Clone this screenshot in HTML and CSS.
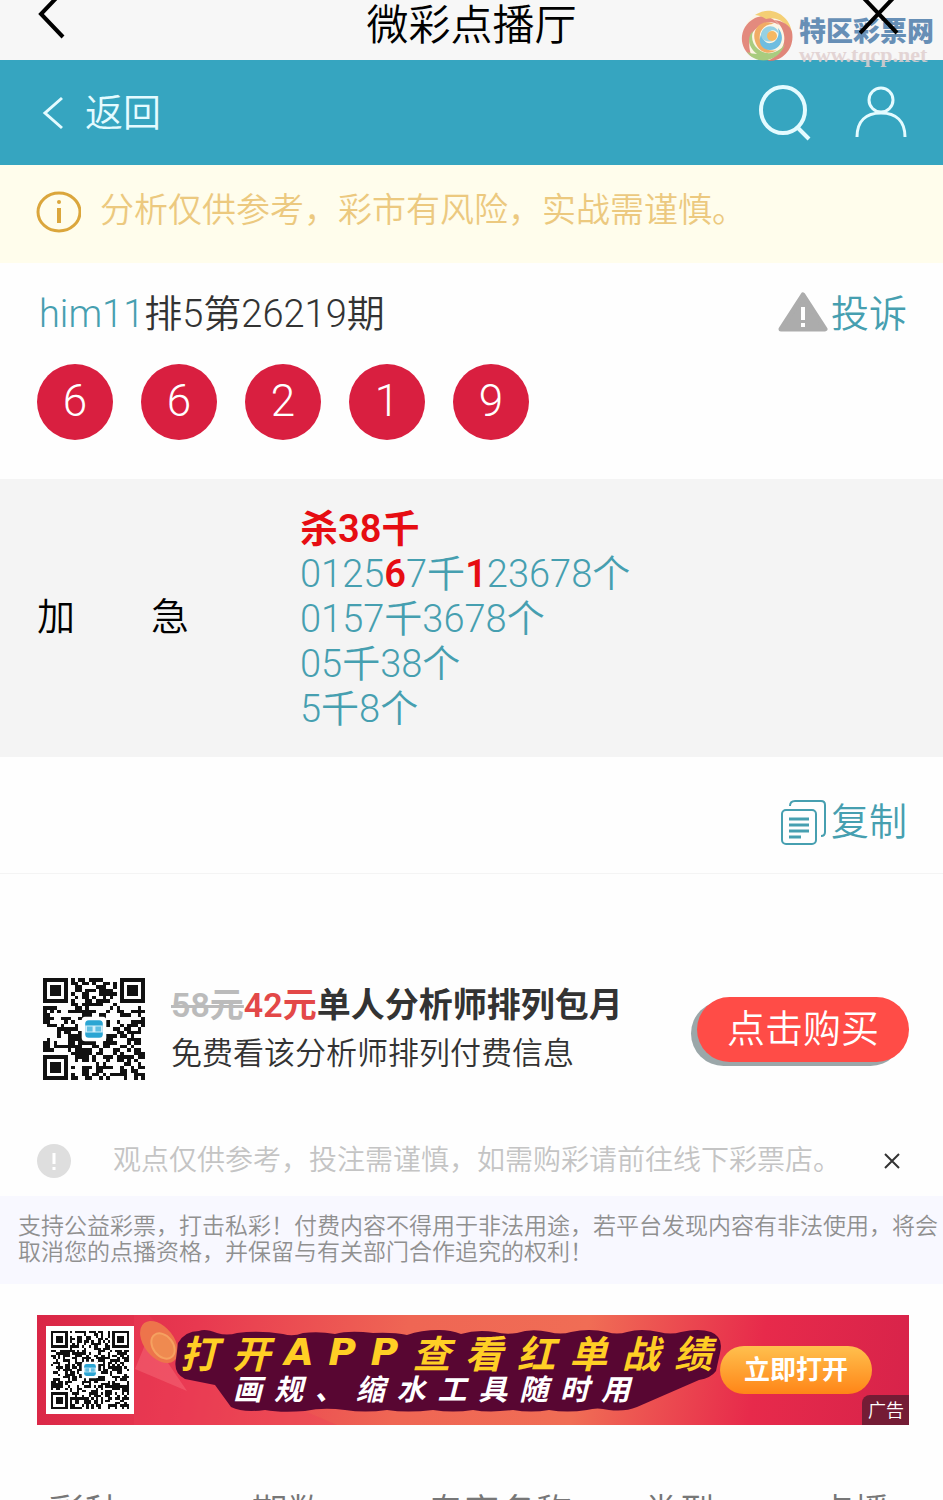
FILE: index.html
```html
<!DOCTYPE html>
<html lang="zh-CN">
<head>
<meta charset="utf-8">
<meta name="viewport" content="width=device-width, initial-scale=1">
<title>微彩点播厅</title>
<link rel="stylesheet" href="styles.css">
</head>
<body>
<div class="page">
  <header class="titlebar">
    <div class="watermark">
      <svg width="52" height="52" viewBox="0 0 52 52">
        <circle cx="26" cy="26" r="24" fill="#fdf6e3"/>
        <path d="M14 8C-3 17-3 38 11 47C5 33 9 20 22 14C28 11 34 12 38 15C32 7 23 4 14 8Z" fill="#e0776a"/>
        <path d="M14 5C30-6 50 6 51 24C46 12 35 6 25 9C20 6 17 5 14 5Z" fill="#f4c95f"/>
        <path d="M51 22C54 38 42 52 26 51C38 46 45 36 43 25C42 18 38 13 33 10C42 11 49 15 51 22Z" fill="#dd7365"/>
        <path d="M6 42C16 56 38 52 44 34C37 44 25 46 17 39C11 34 10 27 12 21C5 28 8 38 16 44C13 44 9 43 6 42Z" fill="#9cc56b"/>
        <path d="M14 31C10 18 22 8 33 14C25 13 17 20 19 30C21 38 28 42 36 40C27 46 17 42 14 31Z" fill="#f0a04b"/>
        <path d="M37 18C45 27 40 40 29 40C20 40 16 31 21 23C21 30 25 34 30 33C36 32 39 25 37 18Z" fill="#58b3dc"/>
        <path d="M20 24C22 14 37 13 38 25C35 19 29 19 27 24C26 28 29 31 32 31C25 33 20 30 20 24Z" fill="#86cbe0"/>
        <circle cx="31" cy="26" r="5" fill="#f6ae49"/>
      </svg>
      <div class="watermark-text"><strong>特区彩票网</strong><span>www.tqcp.net</span></div>
    </div>
    <button class="icon-btn" aria-label="后退"><svg width="28" height="48" viewBox="0 0 28 48"><path d="M26-10 3 14 25 37" fill="none" stroke="#000" stroke-width="4"/></svg></button>
    <h1>微彩点播厅</h1>
    <button class="icon-btn" aria-label="关闭"><svg width="40" height="48" viewBox="0 0 40 48"><path d="M-3-10 38 33M40-8 1 33" fill="none" stroke="#000" stroke-width="4"/></svg></button>
  </header>

  <nav class="navbar">
    <a href="#" class="back"><svg width="22" height="34" viewBox="0 0 22 34"><path d="M20 2 3 17 20 32" fill="none" stroke="#e4fbff" stroke-width="3"/></svg>返回</a>
    <div class="nav-actions">
      <button class="icon-btn" aria-label="搜索"><svg width="52" height="56" viewBox="0 0 52 56" fill="none" stroke="#e4fbff" stroke-width="4"><ellipse cx="24" cy="25" rx="22" ry="23"/><path d="m38 42 12 12"/></svg></button>
      <button class="icon-btn" aria-label="我的"><svg width="52" height="54" viewBox="0 0 52 54" fill="none" stroke="#e4fbff" stroke-width="3"><circle cx="26" cy="14" r="12"/><path d="M2 51C2 35 11 27 26 27S50 35 50 51"/></svg></button>
    </div>
  </nav>

  <p class="notice"><svg width="45" height="42" viewBox="0 0 45 42"><ellipse cx="23" cy="21" rx="21" ry="19" fill="none" stroke="#dba63c" stroke-width="3"/><path d="M23 17V32" stroke="#dba63c" stroke-width="4"/><circle cx="23" cy="11" r="2" fill="#dba63c"/></svg><span>分析仅供参考，彩市有风险，实战需谨慎。</span></p>

  <section class="issue">
    <div class="issue-head">
      <h2><a href="#">him11</a>排5第26219期</h2>
      <a href="#" class="action"><svg width="50" height="44" viewBox="0 0 50 44"><path d="M25 3 47 37H3Z" fill="#acacac" stroke="#acacac" stroke-width="5" stroke-linejoin="round"/><path d="M25 15V28M25 31V35" stroke="#fff" stroke-width="4"/></svg>投诉</a>
    </div>
    <div class="balls"><span>6</span><span>6</span><span>2</span><span>1</span><span>9</span></div>
  </section>

  <section class="picks">
    <div class="picks-label"><span>加</span><span>急</span></div>
    <div class="picks-body">
      <div><b>杀38千</b></div>
      <div>0125<b>6</b>7千<b>1</b>23678个</div>
      <div>0157千3678个</div>
      <div>05千38个</div>
      <div>5千8个</div>
    </div>
  </section>

  <div class="copy-row">
    <button class="action"><svg width="50" height="46" viewBox="0 0 50 46" fill="none" stroke="#469fb0" stroke-width="2"><rect x="4" y="11" width="34" height="34" rx="4"/><path d="M12 7Q12 2 17 2H43Q47 2 47 6V33Q47 37 43 37"/><path d="M11 20H31M11 26H31M11 32H31M11 38H23" stroke-width="3"/></svg>复制</button>
  </div>

  <section class="offer">
    <svg class="qr" width="102" height="102" data-size="29" data-seed="7" role="img" aria-label="二维码"></svg>
    <div class="offer-text">
      <h3><del>58元</del><em>42元</em>单人分析师排列包月</h3>
      <p>免费看该分析师排列付费信息</p>
    </div>
    <button class="buy">点击购买</button>
  </section>

  <div class="tip">
    <svg width="34" height="34" viewBox="0 0 34 34"><circle cx="17" cy="17" r="17" fill="#dedede"/><path d="M17 9V20M17 23V26" stroke="#fff" stroke-width="3"/></svg>
    <p>观点仅供参考，投注需谨慎，如需购彩请前往线下彩票店。</p>
    <button class="icon-btn" aria-label="关闭提示"><svg width="16" height="16" viewBox="0 0 16 16"><path d="m1 1 14 14M15 1 1 15" stroke="#333" stroke-width="2"/></svg></button>
  </div>

  <p class="legal">支持公益彩票，打击私彩！付费内容不得用于非法用途，若平台发现内容有非法使用，将会取消您的点播资格，并保留与有关部门合作追究的权利！</p>

  <aside class="banner">
    <svg class="banner-art" viewBox="0 0 872 110" preserveAspectRatio="none" aria-hidden="true">
      <path d="M97 0H112L160 50 300 110H97Z" fill="#ee4058" opacity=".35"/>
      <path d="M98 54 150 76 112 20Z" fill="#ff8a91" opacity=".3"/>
      <ellipse cx="122" cy="27" rx="15" ry="24" transform="rotate(-38 122 27)" fill="#ed744b"/>
      <ellipse cx="126" cy="31" rx="10" ry="14" transform="rotate(-38 126 31)" fill="#ef8a50" stroke="#f5a160" stroke-width="2"/>
      <path d="M141 28Q148 16 162 16Q168 13 180 18Q190 21 200 18Q222 15 246 19Q256 22 266 18Q282 16 298 19Q312 15 336 18Q356 17 370 20Q384 15 402 15Q414 15 424 19Q440 14 458 17Q468 20 480 18Q494 13 512 17Q524 20 534 17Q552 13 570 17Q580 20 590 17Q604 13 622 17Q634 20 644 17Q662 13 674 17Q687 22 683 38L679 56Q674 63 662 65L600 92Q588 97 572 95Q560 92 550 95Q530 98 512 95Q494 98 476 95Q452 98 436 95Q416 98 396 95Q370 98 350 95Q328 98 308 95Q286 92 268 96Q244 98 228 95Q206 98 194 92L178 70 148 64Q136 58 139 44Z" fill="#580632"/>
    </svg>
    <div class="qr-box"><svg class="qr" width="78" height="78" data-size="33" data-seed="23" role="img" aria-label="下载二维码"></svg></div>
    <div class="slogan">
      <div class="slogan-main"><span>打</span><span>开</span><span class="latin">A</span><span class="latin">P</span><span class="latin">P</span><span>查</span><span>看</span><span>红</span><span>单</span><span>战</span><span>绩</span></div>
      <div class="slogan-sub"><span>画</span><span>规</span><span>、</span><span>缩</span><span>水</span><span>工</span><span>具</span><span>随</span><span>时</span><span>用</span></div>
    </div>
    <button class="open">立即打开</button>
    <span class="ad-tag">广告</span>
  </aside>

  <table class="records">
    <thead><tr><th>彩种</th><th>期数</th><th>专家名称</th><th>类型</th><th>点播</th></tr></thead>
  </table>
</div>
<script src="qr.js"></script>
</body>
</html>
```
FILE: styles.css
```css
* { box-sizing: border-box; margin: 0; padding: 0; }
body {
  background: #fefefe;
  color: #333;
  font-family: Roboto, "Noto Sans CJK SC", sans-serif;
  font-size: 38px;
  font-weight: 350;
}
.page { height: 100vh; overflow-x: hidden; overflow-y: auto; scrollbar-width: none; }
h1, h2, h3 { font-weight: 350; }
a { color: #469fb0; text-decoration: none; }
button { border: 0; background: none; font: inherit; color: inherit; cursor: pointer; }
svg { display: block; flex: none; }
.icon-btn { display: flex; flex: none; }

.titlebar {
  position: relative;
  display: grid;
  grid-template-columns: 1fr auto 1fr;
  align-items: start;
  height: 60px;
  padding: 0 44px 0 38px;
  background: #f7f7f7;
}
.titlebar h1 { padding-left: 6px; color: #000; font-size: 42px; line-height: 52px; }
.titlebar .icon-btn { position: relative; }
.titlebar .icon-btn:last-child { justify-self: end; }
.watermark {
  position: absolute;
  top: 10px;
  right: 9px;
  display: flex;
  gap: 6px;
  opacity: .85;
}
.watermark-text { display: flex; flex-direction: column; }
.watermark strong { color: #4f7dab; font-size: 27px; font-weight: 900; line-height: 44px; }
.watermark-text span {
  margin-top: -9px;
  color: #e0cfcf;
  font: bold 22px/20px "Liberation Serif", serif;
}

.navbar {
  display: flex;
  justify-content: space-between;
  align-items: center;
  height: 105px;
  padding: 0 36px 0 42px;
  background: #36a5c0;
}
.back { display: flex; align-items: center; gap: 21px; color: #e4fbff; line-height: 50px; }
.nav-actions { display: flex; align-items: center; gap: 44px; }

.notice {
  display: flex;
  gap: 19px;
  height: 98px;
  padding: 26px 36px;
  background: #fffdec;
  color: #ecc97f;
  font-size: 34px;
  line-height: 38px;
}

.issue { padding: 26px 36px 39px; }
.issue-head { display: flex; justify-content: space-between; align-items: center; padding-left: 3px; line-height: 50px; }
.issue-head h2 { font-size: 38px; }
.action { display: flex; align-items: center; gap: 3px; color: #469fb0; line-height: 50px; }
.balls { display: flex; gap: 28px; margin-top: 25px; padding-left: 1px; }
.balls span {
  width: 76px;
  height: 76px;
  border-radius: 50%;
  background: #d91f40;
  color: #fff;
  font-size: 44px;
  line-height: 74px;
  text-align: center;
}

.picks {
  display: flex;
  align-items: center;
  padding: 28px 36px 25px 37px;
  background: #f4f4f4;
}
.picks-label { display: flex; gap: 76px; width: 263px; padding-bottom: 4px; color: #000; line-height: 45px; }
.picks-body { color: #469fb0; line-height: 45px; }
.picks-body b { color: #e60d12; font-weight: 600; }

.copy-row {
  display: flex;
  justify-content: flex-end;
  padding: 40px 36px 26px;
  border-bottom: 1px solid #f4f4f4;
}

.offer {
  display: flex;
  align-items: center;
  gap: 26px;
  padding: 104px 34px 62px 43px;
}
.offer-text { flex: 1; }
.offer h3 { font-size: 34px; font-weight: 600; line-height: 50px; white-space: nowrap; }
.offer del { color: #bbb; }
.offer em { color: #e34848; font-style: normal; }
.offer p { font-size: 31px; line-height: 48px; }
.buy {
  height: 65px;
  padding: 0 30px;
  border-radius: 33px;
  background: #ff4c47;
  box-shadow: -6px 4px 0 #9ba7a9;
  color: #fff;
  line-height: 60px;
  white-space: nowrap;
}

.tip { display: flex; align-items: center; padding: 1px 43px 17px 37px; }
.tip p { flex: 1; margin-left: 42px; color: #c4c4c4; font-size: 28px; line-height: 36px; }
.legal {
  padding: 18px 4px 18px 18px;
  background: #f8f8ff;
  color: #909090;
  font-size: 23px;
  line-height: 26px;
}

.banner {
  position: relative;
  display: flex;
  align-items: center;
  height: 110px;
  margin: 31px 34px 0 37px;
  padding: 0 37px 0 9px;
  background: linear-gradient(100deg, #d92646 0, #e83850 18%, #ef6654 42%, #f06d55 62%, #e72a4b 82%, #d7234a 100%);
}
.banner-art { position: absolute; inset: 0; width: 100%; height: 100%; }
.qr-box { position: relative; padding: 5px; background: #fff; }
.slogan { position: relative; flex: 1; margin: 0 8px 0 46px; font-style: italic; font-weight: 700; }
.slogan-main, .slogan-sub { display: flex; justify-content: space-between; }
.slogan-main { color: #ffcf25; font-family: "Noto Sans CJK SC", sans-serif; line-height: 40px; }
.slogan-main .latin { font-family: "DejaVu Sans", sans-serif; }
.slogan-sub { padding: 0 82px 0 53px; color: #fff; font-size: 29px; line-height: 36px; }
.open {
  position: relative;
  height: 48px;
  padding: 0 24px;
  border-radius: 24px;
  background: linear-gradient(#ffc04e, #ff8517);
  color: #fff;
  font-size: 26px;
  font-weight: 700;
  line-height: 48px;
  white-space: nowrap;
}
.ad-tag {
  position: absolute;
  right: 0;
  bottom: 0;
  padding: 2px 5px 0 6px;
  border-radius: 8px 0 0;
  background: #741c35;
  color: #fff;
  font-size: 18px;
  line-height: 28px;
}

.records { width: 100%; margin-top: 63px; table-layout: fixed; border-collapse: collapse; }
.records th { width: 18%; color: #777; font-size: 36px; font-weight: 350; line-height: 50px; text-align: center; white-space: nowrap; }
.records th:nth-child(2) { width: 25%; }
.records th:nth-child(3) { width: 20%; }
.records th:nth-child(5) { width: 19%; }
```
FILE: qr.js
```js
// Fills every .qr svg with finder squares, data modules and a centre badge.
document.querySelectorAll('.qr').forEach(function (svg) {
  var n = Number(svg.dataset.size);
  var seed = Number(svg.dataset.seed);
  var path = '';
  function next() {
    seed = (seed * 1103515245 + 12345) % 2147483648;
    return seed / 2147483648;
  }
  function finder(x, y) {
    var far = n - 8;
    if (x < 8 && y < 8) return [x, y];
    if (x >= far && y < 8) return [n - 1 - x, y];
    if (x < 8 && y >= far) return [x, n - 1 - y];
    return null;
  }
  for (var y = 0; y < n; y++) {
    for (var x = 0; x < n; x++) {
      var f = finder(x, y);
      var on = next() < 0.52;
      if (f) {
        var ring = Math.max(Math.abs(f[0] - 3), Math.abs(f[1] - 3));
        on = ring === 3 || ring < 2;
      }
      if (on) path += 'M' + x + ' ' + y + 'h1v1h-1z';
    }
  }
  var c = n / 2;
  svg.setAttribute('viewBox', '0 0 ' + n + ' ' + n);
  svg.innerHTML =
    '<path d="' + path + '" fill="#111" shape-rendering="crispEdges"/>' +
    '<rect x="' + (c - 3.5) + '" y="' + (c - 3.5) + '" width="7" height="7" rx="1" fill="#fff"/>' +
    '<rect x="' + (c - 2.5) + '" y="' + (c - 2.5) + '" width="5" height="5" rx="1" fill="#2ba5d3"/>' +
    '<path d="M' + (c - 2.5) + ' ' + (c - 1) + 'h5v2h-5z" fill="#d3effa"/>' +
    '<path d="M' + (c - 2) + ' ' + (c - 0.7) + 'h1.6v1.4h-1.6zM' + (c + 0.4) + ' ' + (c - 0.7) + 'h1.6v1.4h-1.6z" fill="#62bfe2"/>';
});
```
